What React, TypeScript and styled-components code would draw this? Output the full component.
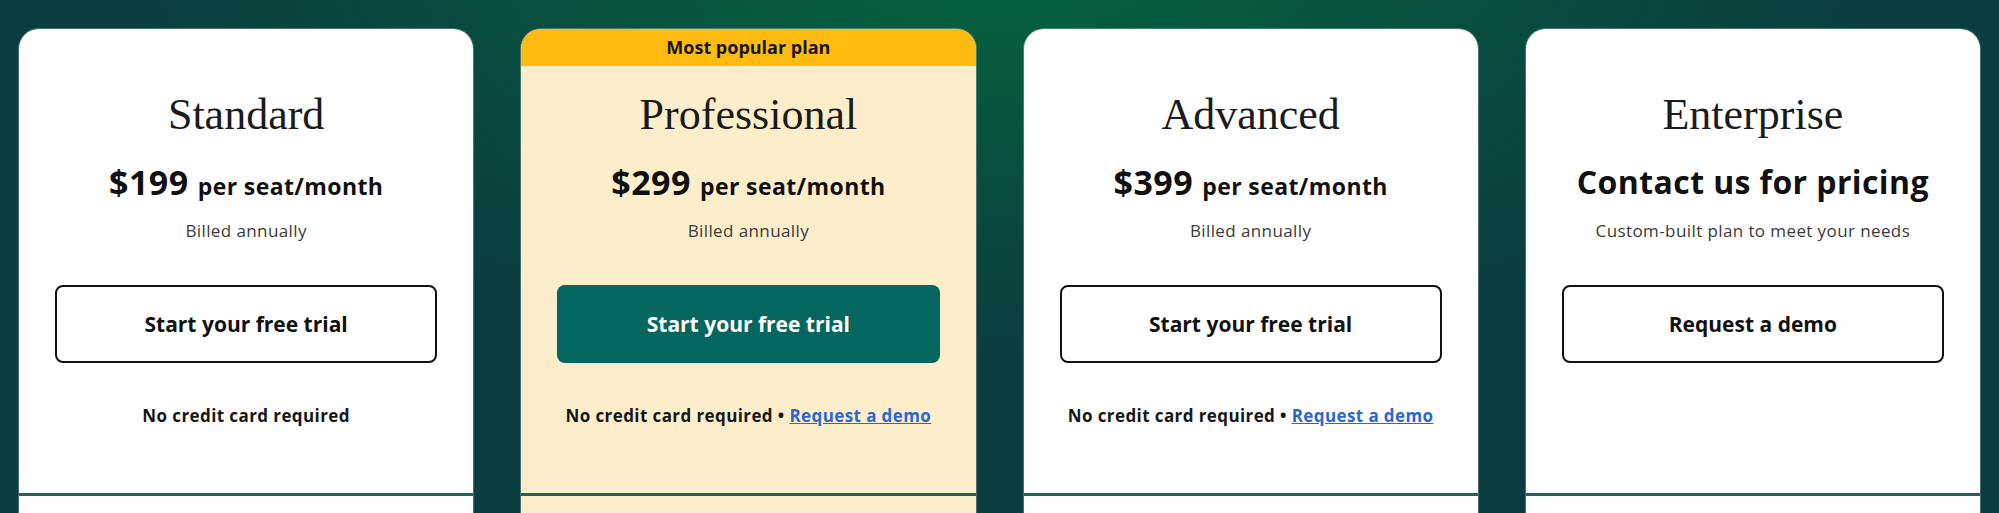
import styled, { createGlobalStyle } from "styled-components";

const GlobalStyle = createGlobalStyle`
  html, body {
    margin: 0;
    padding: 0;
  }
  body {
    font-family: "Open Sans", Lato, sans-serif;
    color: #1a1a1a;
  }
`;

const Page = styled.div`
  width: 1999px;
  height: 513px;
  overflow: hidden;
  box-sizing: border-box;
  padding: 29px 19px 0 19px;
  background: radial-gradient(
      ellipse 900px 420px at 1000px -60px,
      #056540 0%,
      #07573f 35%,
      #0a453f 75%,
      #0a3e3e 100%
    ),
    #0a3e3e;
`;

const Grid = styled.div`
  display: grid;
  grid-template-columns: repeat(4, 1fr);
  column-gap: 48px;
`;

const Card = styled.div<{ $popular?: boolean }>`
  background: ${(p) => (p.$popular ? "#fdeecb" : "#ffffff")};
  border-radius: 20px 20px 0 0;
  overflow: hidden;
  height: 560px;
  display: flex;
  flex-direction: column;
  box-shadow: 0 0 0 1px rgba(255, 255, 255, 0.25);
`;

const Top = styled.div`
  height: 464px;
  display: flex;
  flex-direction: column;
  align-items: center;
  border-bottom: 3px solid #15675f;
`;

const Banner = styled.div<{ $show?: boolean }>`
  height: 37px;
  width: 100%;
  flex-shrink: 0;
  background: ${(p) => (p.$show ? "#ffbb10" : "transparent")};
  display: flex;
  align-items: center;
  justify-content: center;
  padding-bottom: 2px;
  box-sizing: border-box;
  font-size: 18px;
  font-weight: 700;
  color: #161616;
`;

const Title = styled.h2`
  margin: 24px 0 0 0;
  font-family: "Liberation Serif", "Times New Roman", serif;
  font-weight: 400;
  font-size: 44px;
  line-height: 50px;
  color: #1b1b1b;
`;

const Price = styled.div`
  margin-top: 22px;
  height: 40px;
  line-height: 40px;
  display: flex;
  align-items: baseline;
  gap: 9px;
  font-weight: 700;
  color: #111;
`;

const Amount = styled.span`
  font-size: 34px;
  letter-spacing: 0.5px;
`;

const Per = styled.span`
  font-size: 23px;
  letter-spacing: 0.4px;
`;

const Contact = styled.span`
  font-size: 32px;
  letter-spacing: 0.4px;
`;

const Note = styled.div`
  margin-top: 17px;
  font-size: 17px;
  line-height: 24px;
  letter-spacing: 0.4px;
  color: #3a3a3a;
`;

const Button = styled.button<{ $primary?: boolean }>`
  margin-top: 42px;
  width: calc(100% - 72px);
  height: 78px;
  box-sizing: border-box;
  border-radius: 8px;
  border: ${(p) => (p.$primary ? "none" : "2.5px solid #111")};
  background: ${(p) => (p.$primary ? "#04665e" : "transparent")};
  color: ${(p) => (p.$primary ? "#ffffff" : "#111")};
  font-family: "Open Sans", Lato, sans-serif;
  font-size: 21px;
  font-weight: 700;
  cursor: pointer;
`;

const Footnote = styled.div`
  margin-top: 41px;
  font-size: 17px;
  line-height: 24px;
  letter-spacing: 0.4px;
  font-weight: 700;
  color: #161616;
`;

const DemoLink = styled.a`
  color: #2c66d1;
  text-decoration: underline;
`;

type Plan = {
  name: string;
  price?: string;
  note: string;
  cta: string;
  popular?: boolean;
  footnote?: boolean;
  demoLink?: boolean;
};

const plans: Plan[] = [
  { name: "Standard", price: "$199", note: "Billed annually", cta: "Start your free trial", footnote: true },
  {
    name: "Professional",
    price: "$299",
    note: "Billed annually",
    cta: "Start your free trial",
    popular: true,
    footnote: true,
    demoLink: true,
  },
  { name: "Advanced", price: "$399", note: "Billed annually", cta: "Start your free trial", footnote: true, demoLink: true },
  { name: "Enterprise", note: "Custom-built plan to meet your needs", cta: "Request a demo" },
];

export default function App() {
  return (
    <>
      <GlobalStyle />
      <Page>
        <Grid>
          {plans.map((plan) => (
            <Card key={plan.name} $popular={plan.popular}>
              <Top>
                <Banner $show={plan.popular}>{plan.popular ? "Most popular plan" : null}</Banner>
                <Title>{plan.name}</Title>
                <Price>
                  {plan.price ? (
                    <>
                      <Amount>{plan.price}</Amount>
                      <Per>per seat/month</Per>
                    </>
                  ) : (
                    <Contact>Contact us for pricing</Contact>
                  )}
                </Price>
                <Note>{plan.note}</Note>
                <Button $primary={plan.popular}>{plan.cta}</Button>
                {plan.footnote && (
                  <Footnote>
                    No credit card required
                    {plan.demoLink && (
                      <>
                        {" • "}
                        <DemoLink href="#">Request a demo</DemoLink>
                      </>
                    )}
                  </Footnote>
                )}
              </Top>
            </Card>
          ))}
        </Grid>
      </Page>
    </>
  );
}
